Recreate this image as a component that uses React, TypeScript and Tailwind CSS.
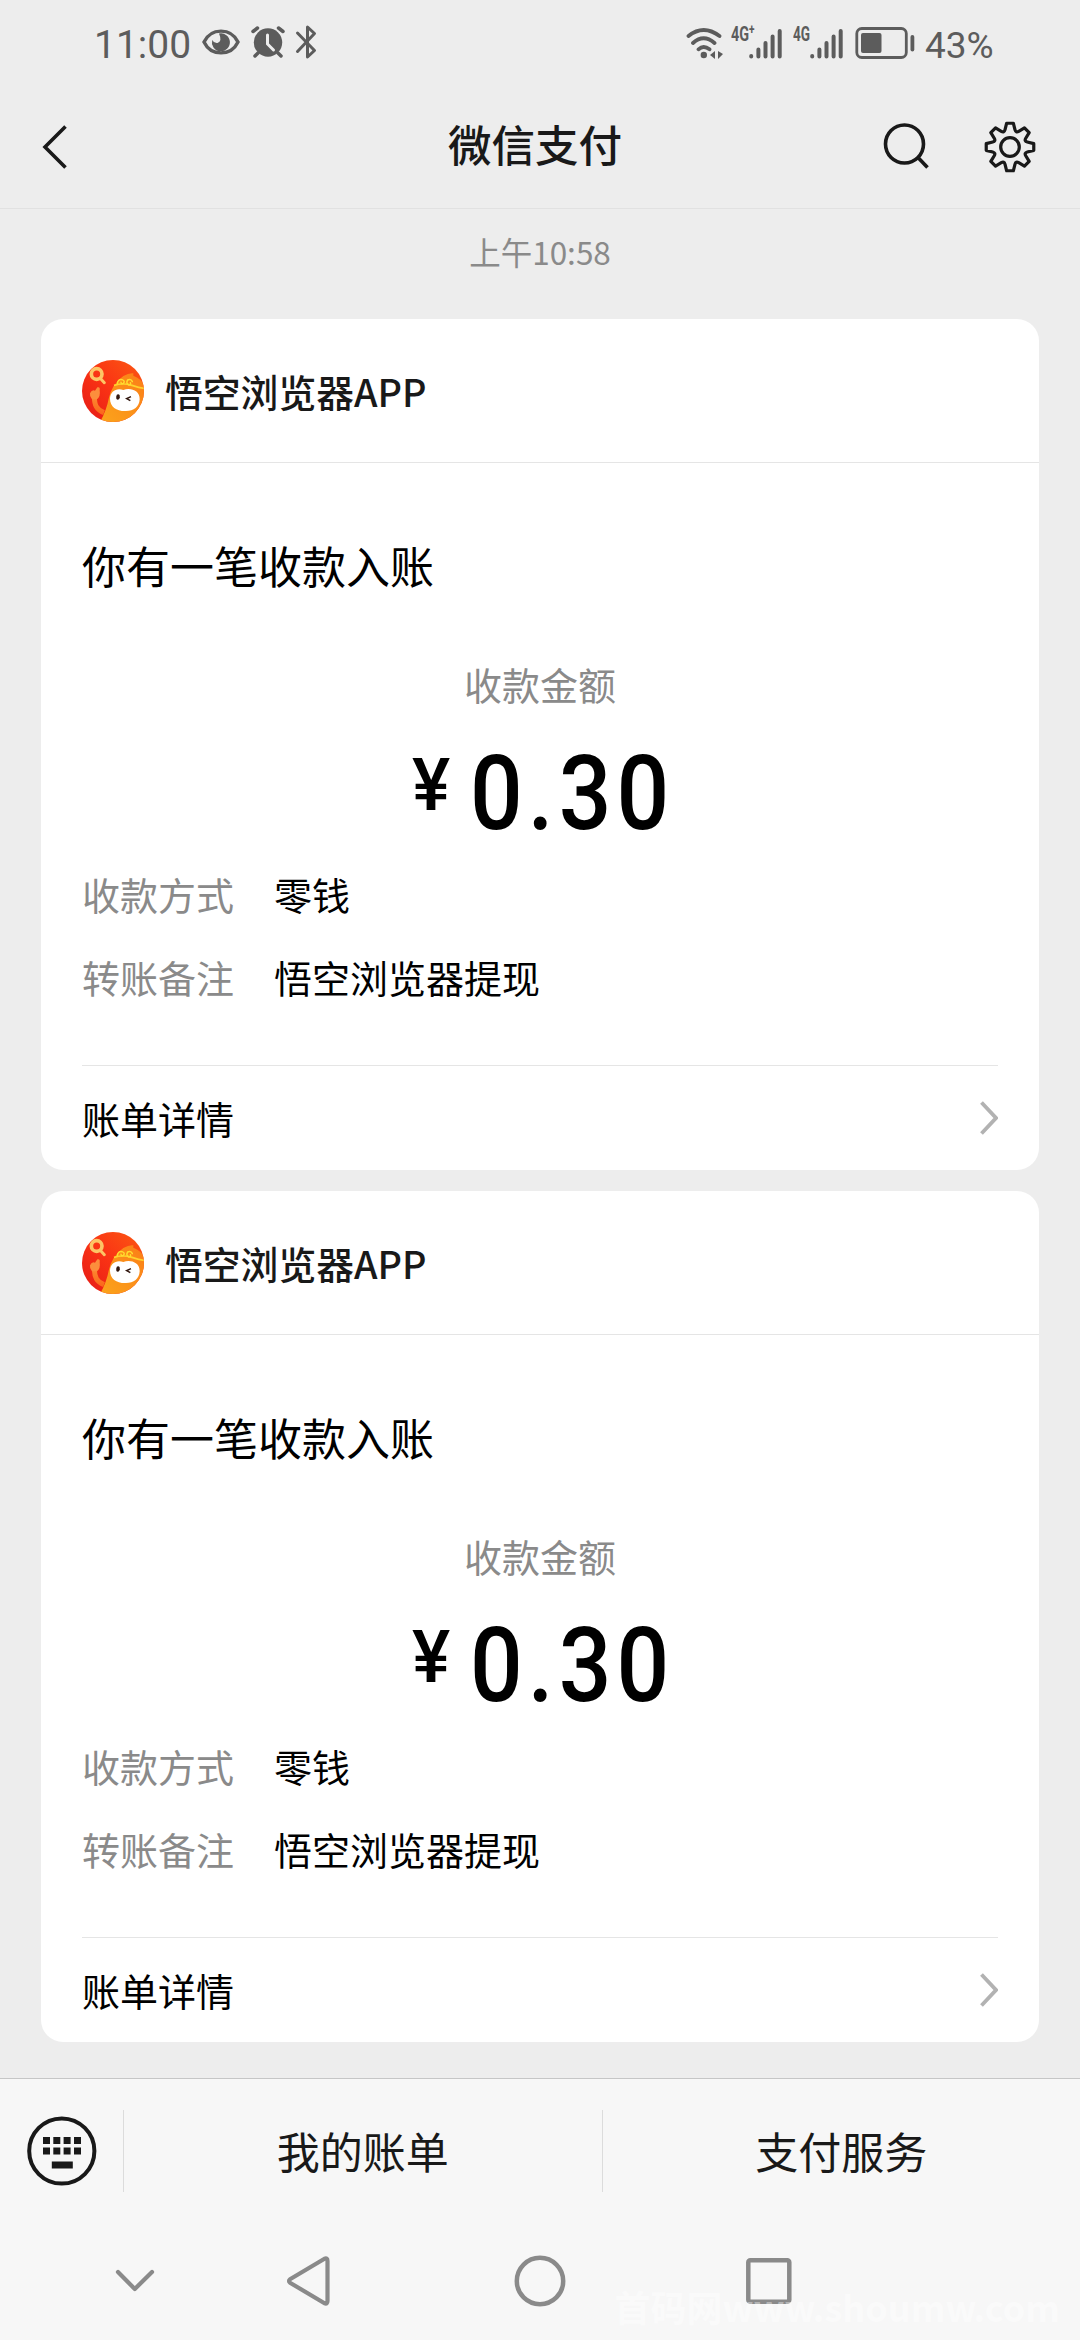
import type { ReactNode } from "react";

type TPayment = {
  id: number;
  sender: string;
  title: string;
  amount: string;
  details: { label: string; value: string }[];
};

const payments: TPayment[] = [1, 2].map((id) => ({
  id,
  sender: "悟空浏览器APP",
  title: "你有一笔收款入账",
  amount: "0.30",
  details: [
    { label: "收款方式", value: "零钱" },
    { label: "转账备注", value: "悟空浏览器提现" },
  ],
}));

const point = (radius: number, deg: number) => {
  const rad = (deg * Math.PI) / 180;
  return `${(radius * Math.sin(rad)).toFixed(2)} ${(-radius * Math.cos(rad)).toFixed(2)}`;
};

// eight teeth, one every 45 degrees
const gearPath =
  Array.from({ length: 8 }, (_, i) => {
    const a = i * 45;
    return `${i === 0 ? "M" : "L"}${point(18, a - 16)} L${point(24, a - 8)} L${point(24, a + 8)} L${point(18, a + 16)} Q${point(15.2, a + 22.5)} ${point(18, a + 29)}`;
  }).join(" ") + "Z";

const SignalBars = () => (
  <svg width="34" height="32" viewBox="0 0 34 32" stroke="currentColor" strokeWidth="4" strokeLinecap="round">
    <path d="M2.2 29v.4M9.4 22.5v7M16.5 16v13.5M23.6 9.5v20M30.7 4v25.5" />
  </svg>
);

const Wifi = () => (
  <svg width="37" height="32" viewBox="0 0 37 32" fill="none" stroke="currentColor" strokeWidth="3.8" strokeLinecap="round">
    <path d="M2.5 9Q17.5-3 33.5 9M7 16Q17.5 6.5 28.5 16M12.5 22.3Q17.5 17.8 23.5 22.3" />
    <circle cx="17.8" cy="28" r="3.2" fill="currentColor" stroke="none" />
    <path d="M29 24v8l-5-4zM32 24v8l5-5z" fill="currentColor" stroke="none" />
  </svg>
);

const StatusBar = () => (
  <div className="flex h-[86px] items-center pr-[86px] pl-[94px] text-[#5c5c5c]">
    <span className="mt-[5px] w-[108px] font-[Roboto] text-[39px] leading-none">11:00</span>
    <svg className="mt-[-2px]" width="38" height="26" viewBox="0 0 38 26">
      <path d="M2 13C9-1.5 29-1.5 36 13C29 27.5 9 27.5 2 13Z" fill="none" stroke="currentColor" strokeWidth="3.4" />
      <path d="M17 4.5A9 9 0 1 1 10.2 11Q12 14.5 15.5 14Q20.5 12.5 17 4.5Z" fill="currentColor" />
    </svg>
    <svg className="ml-[11px] mt-[-2px]" width="34" height="32" viewBox="0 0 34 32">
      <circle cx="17" cy="16.5" r="14.2" fill="currentColor" />
      <path d="M2 5.5 6.5 2M32 5.5 27.5 2M7 27l-3 3M27 27l3 3" stroke="currentColor" strokeWidth="3.5" strokeLinecap="round" />
      <path d="M16.5 9v9l6 6" fill="none" stroke="#ededed" strokeWidth="3" strokeLinecap="round" />
    </svg>
    <svg className="ml-[10px] mt-[-3px]" width="23" height="36" viewBox="0 0 23 36" fill="none" stroke="currentColor" strokeWidth="3" strokeLinecap="round" strokeLinejoin="round">
      <path d="M2.5 9 19.5 26.5 12.5 33V3L19.5 9.5 2.5 27.5" />
    </svg>

    <div className="ml-auto flex items-center">
      <Wifi />
      <span className="ml-[8px] mt-[-18px] w-[17px] origin-left scale-x-[0.72] font-[Roboto] text-[20px] font-bold leading-none whitespace-nowrap">4G<sup className="text-[14px]">+</sup></span>
      <div className="ml-[1px]"><SignalBars /></div>
      <span className="ml-[10px] mt-[-18px] w-[17px] origin-left scale-x-[0.68] font-[Roboto] text-[20px] font-bold leading-none">4G</span>
      <SignalBars />
      <svg className="ml-[11px]" width="60" height="32" viewBox="0 0 60 32">
        <rect x="1.8" y="1.5" width="49.5" height="29" rx="5" fill="none" stroke="currentColor" strokeWidth="2.8" />
        <rect x="6" y="6" width="20.5" height="20" rx="2" fill="currentColor" />
        <rect x="55.5" y="8" width="3.8" height="16.5" rx="1.9" fill="currentColor" />
      </svg>
      <span className="ml-[10px] mt-[5px] w-[69px] font-[Roboto] text-[37px] leading-none">43%</span>
    </div>
  </div>
);

const Header = () => (
  <header className="flex h-[123px] items-center justify-between border-b border-[#e1e1e1] pr-[43px] pl-[42px] text-[#191919]">
    <div className="flex w-[146px]">
      <svg width="26" height="44" viewBox="0 0 26 44" fill="none" stroke="currentColor" strokeWidth="3.6">
        <path d="M23.5 1.5 3 22 23.5 42.5" />
      </svg>
    </div>
    <h1 className="mt-[-6px] text-[43.5px] font-medium leading-none">微信支付</h1>
    <div className="flex w-[155px] items-center justify-between">
      <svg width="48" height="48" viewBox="0 0 48 48" fill="none" stroke="currentColor" strokeWidth="3.6">
        <circle cx="22.5" cy="21" r="19" />
        <path d="M36 34.5 45.5 44.5" />
      </svg>
      <svg width="54" height="54" viewBox="-27 -27 54 54" fill="none" stroke="currentColor" strokeWidth="3.2" strokeLinejoin="round">
        <path d={gearPath} />
        <circle r="9.3" />
      </svg>
    </div>
  </header>
);

const Avatar = ({ id }: { id: number }) => (
  <svg className="size-[62px]" viewBox="0 0 186 186">
    <defs>
      <clipPath id={`clip-${id}`}>
        <circle cx="93" cy="93" r="93" />
      </clipPath>
      <linearGradient id={`red-${id}`} x1="1" y1="0" x2="0" y2="1">
        <stop offset="0" stopColor="#fb5a12" />
        <stop offset="0.5" stopColor="#fa3314" />
        <stop offset="1" stopColor="#e41a17" />
      </linearGradient>
      <linearGradient id={`body-${id}`} x1="0" y1="1" x2="1" y2="0">
        <stop offset="0" stopColor="#fba51c" />
        <stop offset="1" stopColor="#fb7d17" />
      </linearGradient>
      <linearGradient id={`arm-${id}`} x1="0" y1="0" x2="0" y2="1">
        <stop offset="0" stopColor="#fd8a33" />
        <stop offset="1" stopColor="#fb6a1c" />
      </linearGradient>
    </defs>
    <g clipPath={`url(#clip-${id})`}>
      <rect width="186" height="186" fill={`url(#red-${id})`} />
      <path d="M37 108C37 136 44 150 66 158" fill="none" stroke={`url(#arm-${id})`} strokeWidth="15" />
      <path d="M24 100Q30 88 39 92L46 82Q55 79 53 91Q56 110 45 118L30 118Q22 110 24 100Z" fill="#fc8e3c" />
      <path d="M52 190Q74 150 80 116Q90 72 124 48Q142 38 154 40L154 47Q190 60 190 100V190Z" fill={`url(#body-${id})`} />
      <circle cx="44" cy="42" r="16" fill="none" stroke="#fdc565" strokeWidth="11" />
      <path d="M54 54 67 68" stroke="#fdc565" strokeWidth="9" strokeLinecap="round" />
      <path d="M96 76Q125 68 150 76T190 86" fill="none" stroke="#ffd22e" strokeWidth="5" />
      <path d="M106 70Q108 57 120 59Q131 63 124 70Q118 73 117 67M151 65Q146 55 137 60Q131 70 140 75Q148 75 145 68" fill="none" stroke="#ffdc2e" strokeWidth="4.5" strokeLinecap="round" />
      <path d="M84 116C84 94 104 82 124 90C146 82 174 92 173 118C172 142 154 154 129 153C103 153 84 140 84 116Z" fill="#fff" />
      <ellipse cx="108" cy="111" rx="5.5" ry="8" fill="#331810" transform="rotate(8 108 111)" />
      <path d="M147 110 134 116 145 122" fill="none" stroke="#331810" strokeWidth="4.5" />
    </g>
  </svg>
);

const PaymentCard = ({ payment }: { payment: TPayment }) => (
  <section className="h-[851px] rounded-[22px] bg-white text-black">
    <div className="flex h-[144px] items-center gap-[21px] border-b border-[#e5e5e5] px-[41px]">
      <Avatar id={payment.id} />
      <h2 className="text-[37.8px] font-medium leading-none text-[#191919]">{payment.sender}</h2>
    </div>

    <div className="px-[41px]">
      <p className="pt-[80px] text-[44px] leading-[44px]">{payment.title}</p>
      <p className="mt-[78px] text-center text-[38px] leading-[38px] text-[#8a8a8a]">收款金额</p>
      <div className="mt-[39px] flex justify-center gap-[20px] pl-[2px] font-[Roboto] font-medium">
        <span className="mt-[8px] text-[72px] leading-[72px]">¥</span>
        <span className="w-[200px] origin-left scale-x-90 text-[103px] leading-[103px] tracking-[5.7px] whitespace-nowrap">
          {payment.amount}
        </span>
      </div>
      <dl className="mt-[30px] flex flex-col gap-[45px] text-[38px] leading-[38px]">
        {payment.details.map(({ label, value }) => (
          <div key={label} className="flex">
            <dt className="w-[192px] text-[#8a8a8a]">{label}</dt>
            <dd>{value}</dd>
          </div>
        ))}
      </dl>
      <div className="mt-[69px] flex h-[105px] items-center justify-between border-t border-[#e5e5e5]">
        <span className="text-[38px] leading-none">账单详情</span>
        <svg width="18" height="36" viewBox="0 0 18 36" fill="none" stroke="#b2b2b2" strokeWidth="3.8">
          <path d="M1.5 2.5 16 18 1.5 33.5" />
        </svg>
      </div>
    </div>
  </section>
);

const MenuItem = ({ children }: { children: ReactNode }) => (
  <button className="h-[82px] flex-1 border-l border-[#dcdcdc] text-[43px] leading-none text-[#191919]">
    {children}
  </button>
);

const BottomMenu = () => (
  <nav className="flex h-[143px] items-center">
    <div className="flex w-[123px] justify-center">
      <svg width="72" height="72" viewBox="0 0 72 72" fill="#191919">
        <circle cx="35.8" cy="36" r="32.6" fill="none" stroke="#191919" strokeWidth="4" />
        {[17, 27.3, 37.6, 48].map((x) => (
          <g key={x}>
            <rect x={x} y="22" width="7" height="7" />
            <rect x={x} y="32.5" width="7" height="7" />
          </g>
        ))}
        <rect x="25.8" y="46.5" width="21" height="7" />
      </svg>
    </div>
    <MenuItem>我的账单</MenuItem>
    <MenuItem>支付服务</MenuItem>
  </nav>
);

const SystemNav = () => (
  <div className="flex h-[118px] items-center pl-[115px]">
    <svg width="40" height="50" viewBox="0 0 40 50" fill="none" stroke="#8a8a8a" strokeWidth="4.2" strokeLinecap="round" strokeLinejoin="round">
      <path d="M3 16 19.8 33 37 16" />
    </svg>
    <svg className="ml-[131px]" width="46" height="54" viewBox="0 0 46 54" fill="none" stroke="#8a8a8a" strokeWidth="4.2" strokeLinejoin="round">
      <path d="M4 25.3 38.5 4.7Q41.5 3.5 41.5 7V47Q41.5 50.5 38.5 49.3L4 28.7Q2 27 4 25.3Z" />
    </svg>
    <svg className="ml-[182px]" width="52" height="52" viewBox="0 0 52 52" fill="none" stroke="#8a8a8a" strokeWidth="4.5">
      <circle cx="26" cy="26" r="23.2" />
    </svg>
    <svg className="ml-[180px]" width="46" height="46" viewBox="0 0 46 46" fill="none" stroke="#8a8a8a" strokeWidth="4.5">
      <rect x="2.3" y="2.3" width="41" height="41.5" rx="2" />
    </svg>
  </div>
);

const App = () => {
  return (
    <div className="relative flex h-[2340px] w-[1080px] flex-col overflow-hidden bg-[#ededed] font-['Noto_Sans_CJK_SC',sans-serif]">
      <StatusBar />
      <Header />
      <main className="flex flex-1 flex-col px-[41px]">
        <time className="mt-[26px] text-center text-[31.5px] leading-[32px] text-[#8a8a8a]">上午10:58</time>
        <div className="mt-[52px] flex flex-col gap-[21px]">
          {payments.map((payment) => (
            <PaymentCard key={payment.id} payment={payment} />
          ))}
        </div>
      </main>
      <footer className="border-t border-[#c6c6c6] bg-[#f7f7f7]">
        <BottomMenu />
        <SystemNav />
      </footer>
      <span className="absolute right-[20px] bottom-[16px] text-[36px] font-bold leading-none text-white/40">
        首码网www.shoumw.com
      </span>
    </div>
  );
};

export default App;
